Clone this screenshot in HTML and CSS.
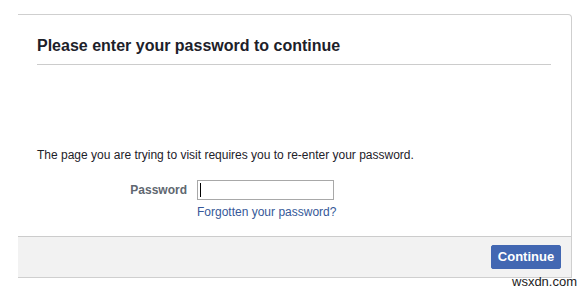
FILE: index.html
```html
<!DOCTYPE html>
<html>
<head>
<meta charset="utf-8">
<link rel="stylesheet" href="styles.css">
</head>
<body>
<div class="dialog">
  <div class="header">
    <h2 class="title">Please enter your password to continue</h2>
  </div>
  <div class="body">
    <p class="msg">The page you are trying to visit requires you to re-enter your password.</p>
    <div class="form">
      <label class="label">Password</label>
      <div class="input"><span class="caret"></span></div>
      <span></span>
      <a class="link" href="#">Forgotten your password?</a>
    </div>
  </div>
  <div class="footer">
    <button class="btn">Continue</button>
  </div>
</div>
<div class="watermark">wsxdn.com</div>
</body>
</html>
```
FILE: styles.css
```css
html, body { margin: 0; padding: 0; background: #fff; }
body {
  font-family: "Liberation Sans", Arial, sans-serif;
  padding: 14px 0 0 18px;
  width: 585px;
  height: 290px;
  box-sizing: border-box;
  position: relative;
  overflow: hidden;
}
.dialog {
  width: 554px;
  box-sizing: border-box;
  border-top: 1px solid #cfcfcf;
  border-right: 1px solid #cfcfcf;
  border-bottom: 1px solid #cfcfcf;
  border-top-right-radius: 4px;
  background: #fff;
}
.header {
  margin: 0 20px 0 19px;
  padding: 21px 0 8px;
  border-bottom: 1px solid #cccccc;
}
.title {
  margin: 0;
  font-size: 16px;
  line-height: 20px;
  font-weight: bold;
  color: #1d2129;
}
.body {
  padding: 82px 19px 16px;
}
.msg {
  margin: 0 0 17px;
  font-size: 12px;
  line-height: 16px;
  color: #1d2129;
}
.form {
  display: grid;
  grid-template-columns: 150px auto;
  column-gap: 10px;
  row-gap: 4px;
  align-items: center;
}
.label {
  text-align: right;
  font-size: 12px;
  font-weight: bold;
  color: #606770;
  line-height: 16px;
}
.input {
  width: 137px;
  height: 20px;
  box-sizing: border-box;
  border: 1px solid #a8a8a8;
  background: #fff;
  display: flex;
  align-items: center;
  padding-left: 2px;
}
.caret {
  width: 1px;
  height: 14px;
  background: #000;
}
.link {
  font-size: 12px;
  line-height: 16px;
  color: #365899;
  text-decoration: none;
}
.footer {
  border-top: 1px solid #cccccc;
  background: #f2f2f2;
  padding: 8px 10px 8px;
  display: flex;
  justify-content: flex-end;
}
.btn {
  width: 70px;
  height: 24px;
  margin: 0;
  padding: 0;
  border: 1px solid #4267b2;
  border-radius: 2px;
  background: #4267b2;
  color: #fff;
  font-family: "Liberation Sans", Arial, sans-serif;
  font-size: 13px;
  font-weight: bold;
  line-height: 22px;
}
.watermark {
  position: absolute;
  left: 512px;
  top: 274px;
  font-family: "Liberation Sans", Arial, sans-serif;
  font-size: 13px;
  line-height: 15px;
  color: #222;
}
```
